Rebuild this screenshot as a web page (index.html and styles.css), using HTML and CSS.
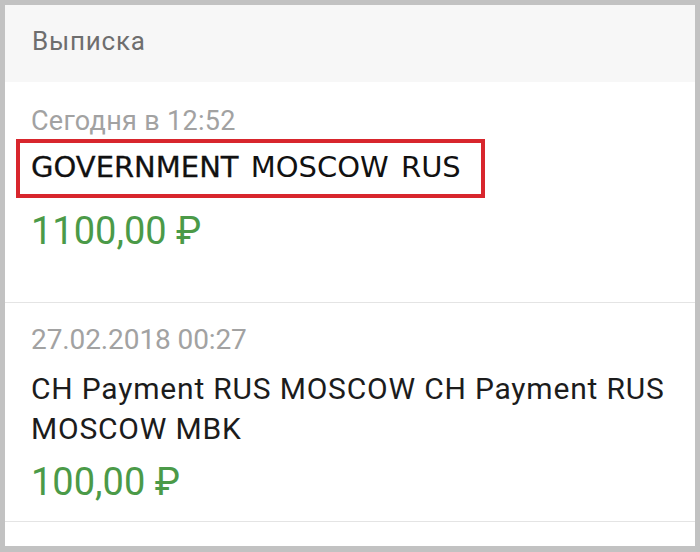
FILE: index.html
```html
<!DOCTYPE html>
<html lang="ru">
<head>
  <meta charset="UTF-8">
  <meta name="viewport" content="width=device-width, initial-scale=1.0">
  <title>Выписка</title>
  <link rel="stylesheet" href="styles.css">
</head>
<body>

  <div class="screen">
    <div class="header">Выписка</div>

    <div class="op op-first">
      <div class="op-date">Сегодня в 12:52</div>
      <div class="op-name highlight"><span class="strong">GOVERNMENT</span> MOSCOW RUS</div>
      <div class="op-sum">1100,00 ₽</div>
    </div>

    <div class="op op-second">
      <div class="op-date">27.02.2018 00:27</div>
      <div class="op-name">CH Payment RUS MOSCOW CH Payment RUS MOSCOW MBK</div>
      <div class="op-sum">100,00 ₽</div>
    </div>
  </div>

</body>
</html>
```

FILE: styles.css
```css
body {
  margin: 0;
  background: #c2c2c2;
  font-family: Roboto, "Liberation Sans", sans-serif;
}
.screen {
  margin: 5px 5px 6px 5px;
  height: 541px;
  background: #fff;
  overflow: hidden;
}
.header {
  background: #f7f7f7;
  color: #6e6e6e;
  font-size: 26px;
  line-height: 28px;
  letter-spacing: 0.8px;
  padding: 22px 27px 27px;
}
.op {
  padding: 24px 27px 49px 26px;
  border-bottom: 1px solid #e4e4e4;
}
.op-date {
  color: #a2a2a2;
  font-size: 27px;
  line-height: 30px;
  letter-spacing: 0.3px;
}
.op-name {
  color: #1c1c1c;
  font-size: 30px;
  line-height: 40px;
  letter-spacing: 0.8px;
  margin-top: 13px;
}
.op-sum {
  color: #4b9a48;
  font-size: 38px;
  line-height: 44px;
  margin-top: 11px;
}
.highlight {
  display: inline-block;
  font-family: "DejaVu Sans", sans-serif;
  font-size: 29px;
  line-height: 35px;
  letter-spacing: 0;
  word-spacing: 3px;
  color: #111;
  border: 4px solid #d8262d;
  margin: 3px 0 0 -15px;
  padding: 7px 20px 9px 11px;
}
.highlight .strong {
  -webkit-text-stroke: 0.3px #111;
}
.op-second {
  padding-top: 21px;
  padding-bottom: 17px;
}
.op-second .op-date {
  font-size: 28px;
  line-height: 32px;
  letter-spacing: -0.1px;
}
```
